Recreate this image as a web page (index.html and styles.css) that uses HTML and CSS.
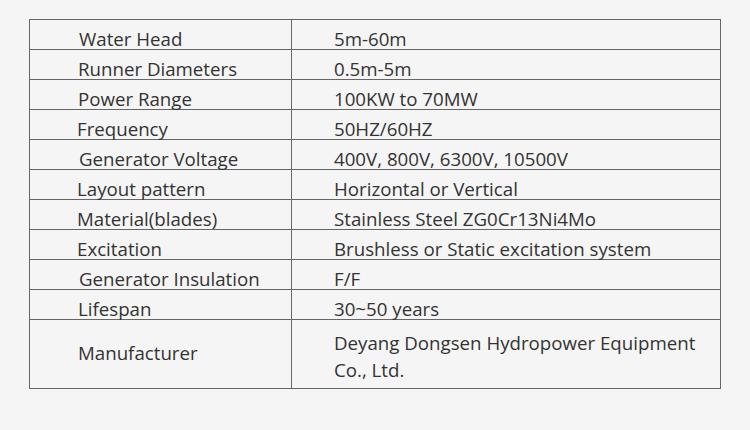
FILE: index.html
```html
<!DOCTYPE html>
<html>
<head>
<meta charset="utf-8">
<link rel="stylesheet" href="styles.css">
</head>
<body>
<div class="page">
  <table class="spec">
    <colgroup><col class="c1"><col class="c2"></colgroup>
    <tr><td class="k in1">Water Head</td><td class="v">5m-60m</td></tr>
    <tr><td class="k">Runner Diameters</td><td class="v">0.5m-5m</td></tr>
    <tr><td class="k">Power Range</td><td class="v">100KW to 70MW</td></tr>
    <tr><td class="k out1">Frequency</td><td class="v">50HZ/60HZ</td></tr>
    <tr><td class="k in1">Generator Voltage</td><td class="v">400V, 800V, 6300V, 10500V</td></tr>
    <tr><td class="k out1">Layout pattern</td><td class="v">Horizontal or Vertical</td></tr>
    <tr><td class="k out1">Material(blades)</td><td class="v">Stainless Steel ZG0Cr13Ni4Mo</td></tr>
    <tr><td class="k out1">Excitation</td><td class="v">Brushless or Static excitation system</td></tr>
    <tr><td class="k in1">Generator Insulation</td><td class="v">F/F</td></tr>
    <tr><td class="k">Lifespan</td><td class="v">30~50 years</td></tr>
    <tr class="last"><td class="k">Manufacturer</td><td class="v">Deyang Dongsen Hydropower Equipment<br>Co., Ltd.</td></tr>
  </table>
</div>
</body>
</html>
```

FILE: styles.css
```css
html, body {
  margin: 0;
  padding: 0;
  background: #f5f5f5;
}
.page {
  padding: 19px 0 0 29px;
}
.spec {
  border-collapse: collapse;
  table-layout: fixed;
  width: 691px;
  font-family: "Open Sans", "Noto Sans", sans-serif;
  font-size: 18.7px;
  color: #333333;
}
.c1 { width: 262px; }
.c2 { width: 429px; }
.spec td {
  border: 1px solid #666666;
  height: 29px;
  padding: 0;
  line-height: 20px;
  vertical-align: bottom;
  white-space: nowrap;
}
.spec td.k { padding-left: 48px; }
.spec td.k.in1 { padding-left: 49px; }
.spec td.k.out1 { padding-left: 47px; }
.spec td.v { padding-left: 42px; }
.spec tr.last td {
  height: 65px;
  line-height: 27px;
  vertical-align: middle;
}
.spec tr.last td.k {
  padding-bottom: 3px;
}
.spec tr.last td.v {
  padding-top: 3px;
}
```
